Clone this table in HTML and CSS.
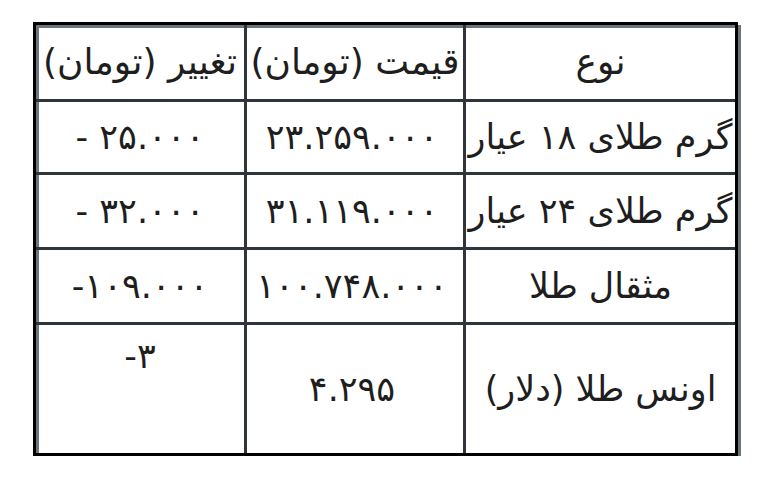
FILE: index.html
```html
<!DOCTYPE html>
<html lang="fa">
<head>
<meta charset="utf-8">
<title>قیمت طلا</title>
<link rel="stylesheet" href="styles.css">
</head>
<body>
<table class="prices" dir="rtl">
  <thead>
    <tr class="row-head">
      <th class="c-type">نوع</th>
      <th class="c-price">قیمت (تومان)</th>
      <th class="c-change">تغییر (تومان)</th>
    </tr>
  </thead>
  <tbody>
    <tr class="row-1">
      <td class="c-type">گرم طلای ۱۸ عیار</td>
      <td class="c-price num">۲۳.۲۵۹.۰۰۰</td>
      <td class="c-change num">- ۲۵.۰۰۰</td>
    </tr>
    <tr class="row-2">
      <td class="c-type">گرم طلای ۲۴ عیار</td>
      <td class="c-price num">۳۱.۱۱۹.۰۰۰</td>
      <td class="c-change num">- ۳۲.۰۰۰</td>
    </tr>
    <tr class="row-3">
      <td class="c-type">مثقال طلا</td>
      <td class="c-price num">۱۰۰.۷۴۸.۰۰۰</td>
      <td class="c-change num">-۱۰۹.۰۰۰</td>
    </tr>
    <tr class="row-4 last">
      <td class="c-type">اونس طلا (دلار)</td>
      <td class="c-price num">۴.۲۹۵</td>
      <td class="c-change num top">-۳</td>
    </tr>
  </tbody>
</table>
</body>
</html>
```

FILE: styles.css
```css
html, body {
  margin: 0;
  padding: 0;
  background: #ffffff;
}

body {
  padding: 22px 0 0 33px;
  font-family: "DejaVu Sans", "Noto Sans", sans-serif;
  color: #1e1e1e;
}

.prices {
  width: 705px;
  table-layout: fixed;
  border-collapse: separate;
  border-spacing: 0;
  border: 3px solid #000000;
  box-shadow: inset 3px 3px 0 #6c747c, 3px 3px 0 #6c747c;
}

.prices th,
.prices td {
  box-sizing: border-box;
  padding: 0 1px;
  text-align: center;
  vertical-align: middle;
  font-size: 35px;
  font-weight: normal;
  line-height: 1.2;
  white-space: nowrap;
  border-bottom: 3px solid #2f353a;
}

.prices th {
  font-size: 36px;
}

.prices .c-type {
  width: 272px;
  border-left: 3px solid #2f353a;
}

.prices .c-price {
  width: 219px;
  border-left: 3px solid #2f353a;
}

.prices .c-change {
  width: 208px;
}

.prices tr.last td {
  border-bottom: none;
}

.num {
  direction: ltr;
}

.prices td.top {
  vertical-align: top;
  padding-top: 10px;
}

.row-head { height: 77px; }
.row-1 { height: 73px; }
.row-2 { height: 75px; }
.row-3 { height: 75px; }
.row-4 { height: 128px; }
```
